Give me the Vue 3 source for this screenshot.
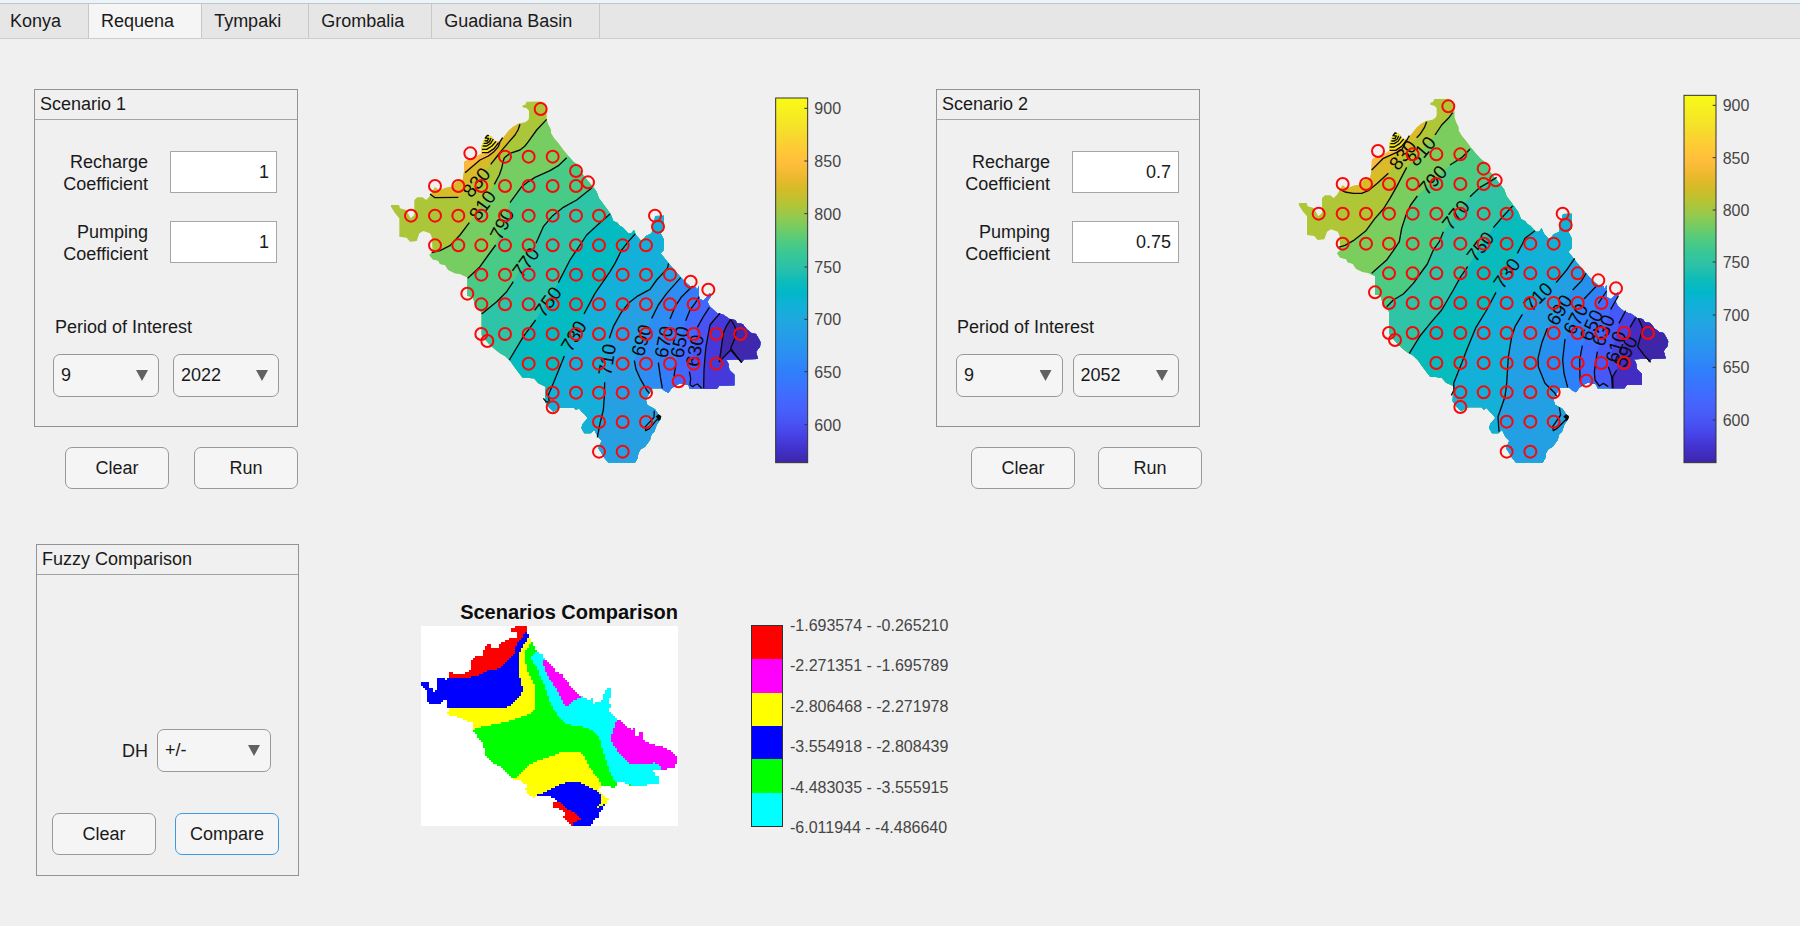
<script setup>
import { ref, reactive } from 'vue'

const tabs = ['Konya', 'Requena', 'Tympaki', 'Grombalia', 'Guadiana Basin']
const activeTab = ref('Requena')

const parseShape = (text) => text.trim().split(/\s+/).map((p) => p.split(',').map(Number))

const parula = [
  '#3e26a8', '#4230ca', '#4640e4', '#4852f4', '#475ffb', '#4269fe', '#3875fe', '#2f7ffb', '#2e8af5', '#2796ee',
  '#259fe6', '#1ea8df', '#12b0d8', '#01b7ca', '#0fbcb8', '#2cc1a9', '#37c797', '#50cb80', '#73cc64', '#98c94b',
  '#b9c332', '#d5bb28', '#eeb92f', '#ffbe3c', '#fec936', '#f8d72f', '#f5e526', '#f7f01f', '#f9fb15',
]
const stops = parula.map((color, i) => ({ color, offset: i / (parula.length - 1) }))

const basin = parseShape(`
  440,35 484,34 495,45 500,60 500,90 505,105 512,118 513,130 522,145 535,160 550,180 565,198 580,215 595,225
  605,250 640,292 650,305 657,325 670,342 692,372 700,393 712,398 720,408 728,412 745,430 754,430 762,420 768,435
  783,452 790,448 798,438 815,430 818,410 826,378 852,377 852,420 842,430 852,450 852,480 842,490 870,525 902,562
  920,580 934,592 948,592 950,602 957,588 957,625 970,632 977,625 990,610 993,618 982,635 990,650 1010,668 1030,674
  1050,688 1065,690 1072,700 1088,702 1100,718 1115,730 1128,732 1142,757 1140,770 1128,785 1134,807 1092,808
  1085,818 1078,808 1038,810 1045,820 1048,840 1063,854 1063,886 1018,887 1010,897 930,897 925,885 900,880
  885,888 875,895 865,908 853,902 845,895 818,895 802,920 798,932 802,945 825,958 843,985 830,1005 823,1025
  815,1032 810,1050 795,1070 782,1078 775,1090 773,1104 765,1118 685,1118 673,1103 662,1085 655,1075 665,1052
  653,1040 643,1020 632,1030 613,1030 604,1015 608,1002 623,985 613,972 605,965 597,955 588,960 582,953 540,953
  520,965 505,950 495,935 497,890 475,880 462,865 455,865 445,863 428,863 410,840 390,812 375,798 360,790
  345,778 330,765 312,745 305,735 305,670 295,655 285,645 278,620 262,618 262,562 240,552 225,550 205,540
  195,525 180,522 175,512 158,508 148,495 158,485 155,440 150,430 130,423 118,430 110,453 90,455 80,443 58,440
  58,385 45,370 33,350 33,345 57,345 60,355 78,360 92,385 103,375 103,330 112,322 128,322 138,330 148,320
  165,292 178,302 195,294 215,290 230,275 248,270 252,245 253,215 270,208 290,200 305,190 305,168 312,150
  322,135 335,140 345,155 357,155 372,140 388,120 400,110 415,101 435,97 445,90 447,82 447,62 440,55 428,52
  428,46 436,44`)

const markerRows = [
  [200, [375, 446, 518]],
  [288, [165, 235, 304, 375, 446, 518, 588]],
  [377, [93, 165, 235, 304, 375, 446, 518, 588, 657]],
  [466, [165, 235, 304, 375, 446, 518, 588, 657, 728, 798]],
  [554, [304, 375, 446, 518, 588, 657, 728, 798, 870]],
  [643, [304, 375, 446, 518, 588, 657, 728, 798, 870, 941]],
  [732, [304, 375, 446, 518, 588, 657, 728, 798, 870, 941, 1009, 1081]],
  [821, [446, 518, 588, 657, 728, 798, 870, 941, 1009]],
  [908, [518, 588, 657, 728, 798]],
  [996, [657, 728, 798]],
  [1085, [657, 728]],
]
const wells = markerRows.flatMap(([y, xs]) => xs.map((x) => [x, y])).concat(
  parseShape('482,57 271,190 588,243 624,277 825,377 834,410 932,575 985,599 262,611 322,753 518,952 896,874'),
)

const project = (s) => ([x, y]) => [x + s.dx, Math.round(1085 + (y - 1085) * s.sy)]
const outline = (s) => basin.map(project(s)).map((p) => p.join(',')).join(' ')
const markers = (s) => wells.map(project(s))

const scenarios = reactive([
  {
    id: 1, recharge: '1', pumping: '1', month: '9', year: '2022',
    dx: 0, sy: 1, base: '#abc639',
    bar: { x: 1187, y: 24, ticks: [[900, 55], [850, 213], [800, 371], [750, 531], [700, 688], [650, 845], [600, 1004]] },
    bands: [
      { color: '#d7bb29', low: '150,312 165,323 235,322', high: '332,223 352,198 362,185 385,158 405,135 414,120 420,103', close: '410,0 0,0 0,250', label: [830, 289, 277, -50] },
      { color: '#ffb63f', low: '255,248 300,210 325,198 340,187 355,170 360,155 368,143', high: '', close: '360,80 200,80 200,248' },
      { color: '#76ce62', low: '155,488 180,482 210,467 240,435 268,398', high: '343,283 358,255 365,235 370,212 373,203 390,190 420,180 435,168 445,155 470,120 500,88', close: '600,0 1400,0 1400,1300 0,1300 0,600', label: [810, 307, 346, -54] },
      { color: '#48cb86', low: '263,565 300,530 325,495 347,465', high: '390,338 425,290 446,274 465,262 510,242 535,227 560,203', close: '700,60 1400,0 1400,1300 0,1300 0,700', label: [790, 366, 402, -64] },
      { color: '#2dc4a8', low: '305,672 350,635 380,605 400,575', high: '468,460 490,410 518,377 550,352 590,330 635,294', close: '800,200 1400,0 1400,1300 0,1300', label: [770, 437, 517, -54] },
      { color: '#04bbc1', low: '388,810 430,740 467,690', high: '535,578 570,510 600,465 620,435 655,403 690,372', close: '800,250 1400,0 1400,1300 0,1300', label: [750, 504, 635, -54] },
      { color: '#15b0da', low: '490,925 498,935 508,938 505,915 520,880 553,798', high: '612,672 645,610 690,545 705,520 725,480 745,455 765,432', close: '800,300 1400,0 1400,1300 400,1300', label: [730, 581, 738, -59] },
      { color: '#269fe3', low: '652,1042 660,1000 670,960 673,920 674,877', high: '688,745 700,710 722,670 745,640 770,620 810,598 830,570 862,535 866,520', close: '900,400 1400,200 1400,1300 640,1300', label: [710, 681, 809, -81] },
      { color: '#2d8df3', low: '808,910 800,900 780,865 768,838 763,812', high: '815,685 835,645 860,610 902,563', close: '1400,300 1400,935 830,935', label: [690, 784, 751, -74] },
      { color: '#327df9', low: '847,895 841,860 835,818', high: '870,687 885,650 905,620 938,588', close: '1400,300 1400,935 850,935', label: [670, 851, 756, -79] },
      { color: '#4267fe', low: '882,860 884,845 887,828', high: '917,692 930,660 945,640 958,620', close: '1400,300 1400,935 875,935', label: [650, 899, 756, -78] },
      { color: '#4853f4', low: '965,895 952,882 945,885 938,890 930,884 932,865 928,845', high: '952,712 970,680 988,652', close: '1400,300 1400,935 965,935', label: [630, 944, 782, -80] },
      { color: '#4639dc', low: '971,895 972,840 975,800 978,770 990,705 1002,690 1020,670', high: '', close: '1400,300 1400,935 971,935' },
      { color: '#3f28ae', low: '1085,818 1052,780 1018,815 1030,730 1038,710 1052,688', high: '', close: '1400,300 1400,935' },
    ],
    details: ['1052,688 1062,705 1068,718 1065,745 1052,775 1085,818', '823,962 822,982 796,1010 797,1022 808,1016 834,985'],
  },
  {
    id: 2, recharge: '0.7', pumping: '0.75', month: '9', year: '2052',
    dx: -7, sy: 1.008, base: '#afc636',
    bar: { x: 1182, y: 16, ticks: [[900, 46], [850, 203], [800, 360], [750, 516], [700, 675], [650, 832], [600, 990]] },
    bands: [
      { color: '#dabb29', low: '152,300 165,306 190,310 215,310 235,302 262,280 295,250', high: '380,143 390,133 403,113 410,95', close: '400,0 0,0 0,250', label: [830, 338, 195, -52] },
      { color: '#ffb940', low: '245,240 280,205 320,187 335,180 345,160 358,137', high: '', close: '350,70 190,70 190,240' },
      { color: '#7bcd5e', low: '145,472 165,466 190,452 228,422 255,385 280,357 300,325 320,290 350,232', high: '435,135 455,105 475,85 488,68', close: '600,-20 1400,0 1400,1300 0,1300 0,580', label: [810, 395, 183, -50] },
      { color: '#4ccb82', low: '245,550 290,510 310,482 328,455 335,415 348,375 362,345 382,318', high: '480,225 515,203 540,177', close: '700,50 1400,0 1400,1300 0,1300 0,700', label: [790, 428, 270, -48] },
      { color: '#2ec4a5', low: '290,650 310,630 340,612 370,580 390,552 412,522 430,480 448,455 460,425', high: '540,320 570,292 600,275 620,262', close: '800,150 1400,0 1400,1300 0,1300', label: [770, 497, 375, -51] },
      { color: '#08bcbe', low: '358,790 390,738 425,695 455,660 490,600 512,560 533,530', high: '610,413 640,378 668,348', close: '800,230 1400,0 1400,1300 0,1300', label: [750, 571, 470, -52] },
      { color: '#13b0d8', low: '484,916 492,900 491,880 515,820 530,780 558,712 590,660 618,607', high: '682,490 697,462 705,445 735,422', close: '790,290 1400,0 1400,1300 400,1300', label: [730, 650, 550, -55] },
      { color: '#239fe3', low: '627,1025 624,980 645,920 650,880 655,800 665,740 675,710 697,673', high: '798,578 830,540 854,505', close: '900,400 1400,200 1400,1300 640,1300', label: [710, 744, 620, -45] },
      { color: '#2691ed', low: '800,920 795,910 765,880 745,830 744,805 755,760 772,715', high: '848,600 875,572 888,550', close: '1400,300 1400,935 830,935', label: [690, 808, 660, -59] },
      { color: '#2d81fa', low: '833,892 822,850 818,810 825,747', high: '882,627 920,587', close: '1400,300 1400,935 850,935', label: [670, 857, 687, -62] },
      { color: '#3d6cfe', low: '870,873 869,810 877,767', high: '925,640 950,603', close: '1400,300 1400,935 872,935', label: [650, 904, 706, -66] },
      { color: '#4658f7', low: '955,890 940,880 928,888 915,870 913,845 922,785', high: '962,658 985,618', close: '1400,300 1400,935 958,935', label: [630, 940, 721, -68] },
      { color: '#4743e7', low: '967,895 965,860 955,830', high: '987,700 1007,662', close: '1400,300 1400,935 968,935', label: [610, 977, 770, -74] },
      { color: '#422cc2', low: '969,895 968,860 980,840', high: '1020,712 1037,683', close: '1400,300 1400,935 970,935', label: [590, 1007, 785, -66] },
      { color: '#3e26a8', low: '1082,817 1062,795 1043,770 1058,715 1045,685', high: '', close: '1400,300 1400,935' },
    ],
    details: ['808,952 812,975 788,1010 790,1022 800,1016 832,985'],
  },
])
const bandShape = (b) => [b.low, b.high, b.close].filter(Boolean).join(' ')
const shiftY = (s, y) => (s.id === 1 ? y : y - 7)

/* Comparison raster: polygons sampled on a regular grid of cells. */
const CELL = 6
const inside = (poly, x, y) => {
  let hit = false
  for (let i = 0, j = poly.length - 1; i < poly.length; j = i++) {
    const [xi, yi] = poly[i]
    const [xj, yj] = poly[j]
    if (yi > y !== yj > y && x < ((xj - xi) * (y - yi)) / (yj - yi) + xi) hit = !hit
  }
  return hit
}
const area = parseShape(`
  337,112 348,112 348,106 380,106 382,125 390,140 398,160 412,183 425,192 440,210 458,230 470,245 490,255 497,270
  515,290 525,300 540,318 560,325 570,335 575,320 583,340 610,330 615,305 621,297 634,297 634,318 626,330 634,345
  628,362 652,388 665,395 680,412 700,418 706,412 708,435 715,440 720,424 733,424 733,438 725,445 750,460 795,472
  818,487 834,503 834,515 825,523 830,537 800,537 796,545 787,537 762,540 765,555 779,558 779,580 745,580 740,587
  690,587 685,580 655,577 645,592 636,592 632,588 602,588 600,603 606,612 628,628 612,650 610,660 598,670 595,682
  580,692 575,710 515,710 508,695 488,684 498,678 490,660 478,657 458,655 458,640 472,633 462,620 455,622 450,616
  415,615 405,624 388,615 378,600 380,585 360,572 340,570 310,535 290,525 270,510 255,492 252,462 240,450 222,424
  222,400 205,395 190,388 180,382 160,378 142,372 150,357 143,350 143,330 130,330 120,343 100,343 82,338 82,305
  72,292 64,290 64,277 88,277 88,290 100,297 103,305 112,300 112,268 118,265 135,265 138,270 148,258 148,247
  162,247 165,255 190,252 215,240 215,212 225,200 248,198 252,180 262,163 274,165 280,177 290,177 310,155 335,143
  350,142 350,125 337,123`)
const zones = [
  ['#ff00ff', '430,210 452,212 500,262 547,318 522,332 500,352 485,325 470,295 455,275 440,252 438,235 430,220'],
  ['#ff00ff', '655,380 645,410 637,430 635,455 660,490 690,523 760,525 762,518 775,522 790,542 850,560 850,380'],
  ['#ff0000', '150,262 195,265 240,255 260,243 300,235 320,215 345,190 350,165 365,145 383,122 383,100 200,100 130,240'],
  ['#0000ff', '0,100 392,100 390,140 370,165 361,185 361,265 370,298 362,315 345,335 320,354 148,356 0,356'],
  ['#ffff00', '0,100 395,100 395,155 388,170 377,182 375,210 385,245 400,275 409,300 409,345 400,367 370,380 330,393 300,400 270,406 240,412 222,420 0,430'],
  ['#ff0000', '450,630 480,637 500,655 530,670 542,688 520,700 518,715 400,720'],
  ['#ffff00', '603,600 640,625 618,632 600,652 592,652 605,635'],
  ['#0000ff', '412,614 440,605 480,585 500,576 538,576 560,588 590,600 602,615 603,640 598,652 640,630 640,720 400,720'],
  ['#ffff00', '340,568 370,545 390,522 430,507 460,497 490,485 530,485 550,492 560,515 575,540 600,570 606,590 606,625 650,640 650,720 300,720'],
  ['#00ffff', '400,192 412,185 430,186 900,186 900,620 645,577 635,555 625,530 612,490 603,465 600,440 585,425 560,413 500,402 470,370 455,345 440,300 425,265 410,230 395,207'],
].map(([color, text]) => [color, parseShape(text)])
const raster = {}
for (let y = 108; y < 708; y += CELL) {
  for (let x = 64; x < 834; x += CELL) {
    const cx = x + CELL / 2
    const cy = y + CELL / 2
    if (!inside(area, cx, cy)) continue
    const zone = zones.find(([, poly]) => inside(poly, cx, cy))
    const color = zone ? zone[0] : '#00ff00'
    raster[color] = (raster[color] || '') + `M${x} ${y}h${CELL}v${CELL}h-${CELL}z`
  }
}

const direction = ref('+/-')
const legend = [
  { color: '#ff0000', text: '-1.693574 - -0.265210' },
  { color: '#ff00ff', text: '-2.271351 - -1.695789' },
  { color: '#ffff00', text: '-2.806468 - -2.271978' },
  { color: '#0000ff', text: '-3.554918 - -2.808439' },
  { color: '#00ff00', text: '-4.483035 - -3.555915' },
  { color: '#00ffff', text: '-6.011944 - -4.486640' },
]
</script>

<template>
  <div class="app">
    <nav class="tabs" role="tablist">
      <button
        v-for="tab in tabs"
        :key="tab"
        type="button"
        role="tab"
        class="tab"
        :class="{ 'tab--active': tab === activeTab }"
        :aria-selected="tab === activeTab"
        @click="activeTab = tab"
      >{{ tab }}</button>
    </nav>

    <main class="content">
      <div class="scenarios">
        <section v-for="s in scenarios" :key="s.id" class="scenario" :class="'scenario--' + s.id">
          <form class="controls" @submit.prevent>
            <div class="panel">
              <h2 class="panel-title">Scenario {{ s.id }}</h2>
              <div class="panel-body">
                <div class="field">
                  <label :for="'recharge' + s.id">Recharge<br>Coefficient</label>
                  <input :id="'recharge' + s.id" v-model="s.recharge" type="text" inputmode="decimal">
                </div>
                <div class="field">
                  <label :for="'pumping' + s.id">Pumping<br>Coefficient</label>
                  <input :id="'pumping' + s.id" v-model="s.pumping" type="text" inputmode="decimal">
                </div>
                <label class="period-label" :for="'month' + s.id">Period of Interest</label>
                <div class="period">
                  <span class="dropdown">
                    <select :id="'month' + s.id" v-model="s.month"><option>{{ s.month }}</option></select>
                  </span>
                  <span class="dropdown">
                    <select v-model="s.year" aria-label="Year"><option>{{ s.year }}</option></select>
                  </span>
                </div>
              </div>
            </div>
            <div class="actions">
              <button type="button" class="btn">Clear</button>
              <button type="button" class="btn">Run</button>
            </div>
          </form>

          <svg class="map" viewBox="0 -3 1440 1143" role="img" :aria-label="'Groundwater level map, scenario ' + s.id">
            <defs>
              <clipPath :id="'basin' + s.id"><polygon :points="outline(s)" /></clipPath>
              <linearGradient :id="'scale' + s.id" x1="0" y1="1" x2="0" y2="0">
                <stop v-for="st in stops" :key="st.offset" :offset="st.offset" :stop-color="st.color" />
              </linearGradient>
            </defs>
            <g :clip-path="'url(#basin' + s.id + ')'">
              <rect x="0" y="0" width="1200" height="1140" :fill="s.base" />
              <polygon v-for="(b, i) in s.bands" :key="i" :points="bandShape(b)" :fill="b.color" />
              <g :transform="'translate(' + s.dx + ' ' + (shiftY(s, 0)) + ')'">
                <polygon points="304,195 304,130 340,130 352,152 346,170 330,182" fill="#f3e724" />
              </g>
            </g>
            <g class="contours">
              <template v-for="(b, i) in s.bands" :key="i">
                <polyline :points="b.low" />
                <polyline v-if="b.high" :points="b.high" />
              </template>
              <polyline v-for="d in s.details" :key="d" :points="d" />
              <g :transform="'translate(' + s.dx + ' ' + (shiftY(s, 0)) + ')'">
                <path d="M306 188h18l18-12 14-18M306 178h14l16-10 12-14M308 168h12l12-8 8-13M311 160h9l9-6 4-10M314 152l8 1 4-8-10-1 6-8 5 1" />
              </g>
              <path :transform="'translate(' + s.dx + ' 0)'" d="M829 982l6-6 6 4-3 8-5 2M833 980l5 6" stroke-width="6" />
            </g>
            <g class="contour-labels">
              <template v-for="(b, i) in s.bands" :key="i">
                <text
                  v-if="b.label"
                  :transform="`translate(${b.label[1]} ${b.label[2]}) rotate(${b.label[3]})`"
                  y="20"
                >{{ b.label[0] }}</text>
              </template>
            </g>
            <g class="wells">
              <circle v-for="([x, y], i) in markers(s)" :key="i" :cx="x" :cy="y" r="18" />
            </g>
            <rect
              class="scale-bar"
              :x="s.bar.x"
              :y="s.bar.y"
              width="96"
              :height="1118 - s.bar.y"
              :fill="'url(#scale' + s.id + ')'"
            />
            <g v-for="[value, y] in s.bar.ticks" :key="value" class="scale-tick">
              <path :d="`M${s.bar.x + 86} ${y}h10`" />
              <text :x="s.bar.x + 116" :y="y + 18">{{ value }}</text>
            </g>
          </svg>
        </section>
      </div>

      <section class="comparison">
        <form class="panel panel--fuzzy" @submit.prevent>
          <h2 class="panel-title">Fuzzy Comparison</h2>
          <div class="fuzzy-body">
            <div class="direction">
              <label for="dh">DH</label>
              <span class="dropdown">
                <select id="dh" v-model="direction"><option>+/-</option></select>
              </span>
            </div>
            <div class="fuzzy-actions">
              <button type="button" class="btn">Clear</button>
              <button type="button" class="btn btn--focus">Compare</button>
            </div>
          </div>
        </form>

        <figure class="result">
          <figcaption>Scenarios Comparison</figcaption>
          <svg viewBox="64 108 770 600" shape-rendering="crispEdges" role="img" aria-label="Scenarios comparison map">
            <rect x="64" y="108" width="770" height="600" fill="#fff" />
            <path v-for="(d, color) in raster" :key="color" :d="d" :fill="color" />
          </svg>
        </figure>

        <div class="legend">
          <div class="legend-bar">
            <span v-for="item in legend" :key="item.color" :style="{ background: item.color }"></span>
          </div>
          <ul class="legend-labels">
            <li v-for="item in legend" :key="item.text">{{ item.text }}</li>
          </ul>
        </div>
      </section>
    </main>
  </div>
</template>

<style>
body {
  margin: 0;
  background: #f0f0f0;
}
</style>

<style scoped>
.app {
  min-height: 100vh;
  box-sizing: border-box;
  border-top: 3px solid #eaf4f9;
  background: #f0f0f0;
  color: #1a1a1a;
  font-family: "Liberation Sans", Arial, sans-serif;
  font-size: 18px;
  line-height: 22px;
}

button,
input,
select {
  box-sizing: border-box;
  margin: 0;
  color: inherit;
  font: inherit;
}

.tabs {
  display: flex;
  border-top: 1px solid #c2c6c8;
  border-bottom: 1px solid #cdcdcd;
  background: #e6e6e6;
}

.tab {
  height: 34px;
  padding: 0 27px 0 12px;
  border: 0;
  border-right: 1px solid #c8c8c8;
  background: #e6e6e6;
}

.tab:first-child {
  padding-left: 10px;
}

.tab--active {
  margin-bottom: -1px;
  background: #f5f5f5;
}

.content {
  padding: 50px 0 48px;
}

.scenarios {
  display: grid;
  grid-template-columns: 1fr 1fr;
}

.scenario {
  display: flex;
  align-items: flex-start;
  gap: 82px;
  padding-left: 34px;
}

.scenario--2 {
  gap: 90px;
  padding-left: 36px;
}

.controls {
  flex: none;
  width: 264px;
}

.panel {
  box-sizing: border-box;
  border: 1px solid #939393;
}

.panel-title {
  margin: 0;
  padding: 3px 5px 4px;
  border-bottom: 1px solid #a4a4a4;
  font-size: 18px;
  font-weight: 400;
  line-height: 22px;
}

.panel-body {
  padding: 31px 20px 29px;
}

.field {
  display: flex;
  align-items: flex-start;
  justify-content: flex-end;
  gap: 22px;
  margin-bottom: 26px;
  text-align: right;
}

.field input {
  width: 107px;
  height: 42px;
  padding: 0 7px;
  border: 1px solid #a6a6a6;
  background: #fff;
  text-align: right;
}

.period-label {
  display: block;
  margin-top: 51px;
}

.period {
  display: flex;
  gap: 14px;
  margin: 16px -2px 0;
}

.scenario--2 .period {
  gap: 10px;
  margin: 16px 0 0 -1px;
}

.dropdown {
  position: relative;
  flex: 1;
}

.dropdown::after {
  content: "";
  position: absolute;
  top: 16px;
  right: 11px;
  width: 12px;
  height: 11px;
  background: #616161;
  clip-path: polygon(0 0, 100% 0, 50% 100%);
  pointer-events: none;
}

.dropdown select {
  display: block;
  width: 100%;
  height: 43px;
  padding: 0 7px 2px;
  border: 1px solid #999;
  border-radius: 7px;
  background: #f5f5f5;
  appearance: none;
}

.actions {
  display: flex;
  justify-content: flex-end;
  gap: 25px;
  margin-top: 20px;
}

.scenario--2 .actions {
  gap: 23px;
  margin-right: -2px;
}

.btn {
  width: 104px;
  height: 42px;
  padding: 0;
  border: 1px solid #999;
  border-radius: 7px;
  background: #f5f5f5;
}

.btn--focus {
  border-color: #3d9ae2;
}

.map {
  flex: 0 1 480px;
  min-width: 0;
}

.contours {
  fill: none;
  stroke: #0a0a0a;
  stroke-width: 4;
  stroke-linejoin: round;
}

.contour-labels {
  fill: #0a0a0a;
  font-size: 57px;
  text-anchor: middle;
}

.wells {
  fill: none;
  stroke: #fa0808;
  stroke-width: 6;
}

.scale-bar {
  stroke: #333;
  stroke-width: 3;
}

.scale-tick {
  fill: #454545;
  font-size: 48px;
}

.scale-tick path {
  stroke: #333;
  stroke-width: 3;
}

.comparison {
  display: flex;
  align-items: flex-start;
  padding: 55px 0 0 36px;
}

.panel--fuzzy {
  display: flex;
  flex: none;
  flex-direction: column;
  width: 263px;
  min-height: 332px;
}

.fuzzy-body {
  display: flex;
  flex: 1;
  flex-direction: column;
  justify-content: flex-end;
  padding: 0 19px 20px 15px;
}

.direction {
  display: flex;
  align-items: center;
  justify-content: flex-end;
  gap: 9px;
  margin: 0 8px 41px 0;
}

.direction .dropdown {
  flex: 0 0 114px;
}

.fuzzy-actions {
  display: flex;
  justify-content: space-between;
}

.result {
  flex: 0 1 257px;
  margin: 57px 0 0 122px;
}

.result figcaption {
  padding-bottom: 3px;
  color: #0d0d0d;
  font-size: 20px;
  font-weight: 700;
  text-align: right;
}

.result svg {
  display: block;
  width: 100%;
}

.legend {
  display: flex;
  align-items: center;
  gap: 7px;
  margin: 70px 0 0 73px;
}

.legend-bar {
  display: grid;
  box-sizing: border-box;
  width: 32px;
  height: 202px;
  border: 1px solid #333;
}

.legend-labels {
  display: flex;
  flex-direction: column;
  justify-content: space-between;
  height: 222px;
  margin: 0;
  padding: 2px 0 0;
  color: #454545;
  font-size: 16px;
  line-height: 20px;
  list-style: none;
}
</style>
